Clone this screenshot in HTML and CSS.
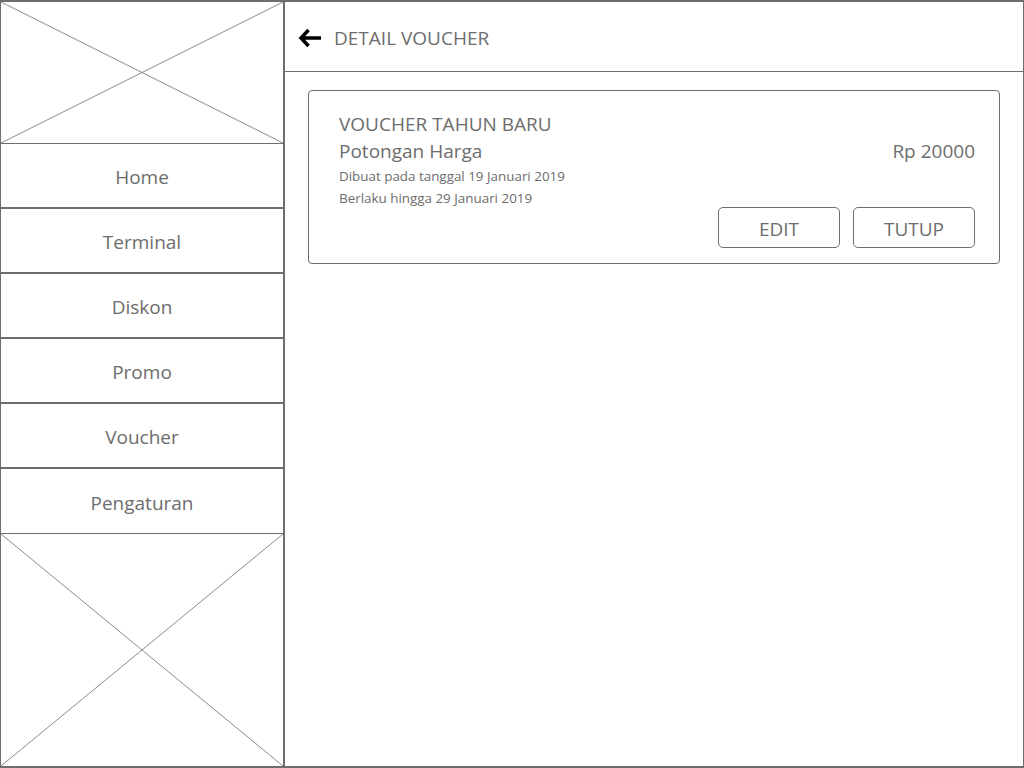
FILE: index.html
```html
<!DOCTYPE html>
<html lang="en">
<head>
  <meta charset="UTF-8" />
  <meta name="viewport" content="width=device-width, initial-scale=1" />
  <title>Detail Voucher</title>
  <link rel="stylesheet" href="styles.css">
</head>
<body>
  <div class="app">
    <aside class="sidebar">
      <div class="placeholder top">
        <svg viewBox="0 0 100 100" preserveAspectRatio="none">
          <line x1="0" y1="0" x2="100" y2="100" vector-effect="non-scaling-stroke" />
          <line x1="100" y1="0" x2="0" y2="100" vector-effect="non-scaling-stroke" />
        </svg>
      </div>
      <nav class="menu">
        <a class="menu-item">Home</a>
        <a class="menu-item">Terminal</a>
        <a class="menu-item">Diskon</a>
        <a class="menu-item">Promo</a>
        <a class="menu-item">Voucher</a>
        <a class="menu-item last">Pengaturan</a>
      </nav>
      <div class="placeholder bottom">
        <svg viewBox="0 0 100 100" preserveAspectRatio="none">
          <line x1="0" y1="0" x2="100" y2="100" vector-effect="non-scaling-stroke" />
          <line x1="100" y1="0" x2="0" y2="100" vector-effect="non-scaling-stroke" />
        </svg>
      </div>
    </aside>

    <main class="main">
      <header class="header">
        <svg class="back" viewBox="0 0 24 24" width="24" height="24">
          <path d="M23 12H4M10.5 4L3 12L10.5 20" />
        </svg>
        <h1>DETAIL VOUCHER</h1>
      </header>

      <section class="card">
        <div class="card-info">
          <h2>VOUCHER TAHUN BARU</h2>
          <div class="type-row">
            <span class="type">Potongan Harga</span>
            <span class="price">Rp 20000</span>
          </div>
          <p class="meta">Dibuat pada tanggal 19 Januari 2019</p>
          <p class="meta">Berlaku hingga 29 Januari 2019</p>
        </div>
        <div class="actions">
          <button>EDIT</button>
          <button>TUTUP</button>
        </div>
      </section>
    </main>
  </div>
</body>
</html>
```

FILE: styles.css
```css
* {
  box-sizing: border-box;
}
body {
  margin: 0;
  font-family: "Open Sans", "Noto Sans", sans-serif;
  color: #6d6d6d;
  background: #fff;
}
.app {
  display: flex;
  height: 768px;
  overflow: hidden;
  border-top: 2px solid #6e6e6e;
  border-bottom: 2px solid #6e6e6e;
  border-left: 1px solid #6e6e6e;
  border-right: 1px solid #6e6e6e;
}
.sidebar {
  width: 284px;
  display: flex;
  flex-direction: column;
  border-right: 2px solid #6e6e6e;
}
.placeholder svg {
  display: block;
  width: 100%;
  height: 100%;
}
.placeholder line {
  stroke: #8a8a8a;
  stroke-width: 1;
}
.placeholder.top {
  height: 142px;
  border-bottom: 1px solid #6e6e6e;
}
.placeholder.bottom {
  flex: 1;
  min-height: 0;
}
.menu {
  display: flex;
  flex-direction: column;
}
.menu-item {
  height: 65px;
  display: flex;
  align-items: center;
  justify-content: center;
  padding-top: 3px;
  font-size: 19px;
  color: #6d6d6d;
  border-bottom: 2px solid #6e6e6e;
}
.menu-item.last {
  border-bottom: 1px solid #6e6e6e;
}
.main {
  flex: 1;
  display: flex;
  flex-direction: column;
}
.header {
  height: 70px;
  display: flex;
  align-items: center;
  padding: 2px 0 0 13px;
  border-bottom: 1px solid #6e6e6e;
}
.back {
  fill: none;
  stroke: #000;
  stroke-width: 3.5;
  stroke-linecap: butt;
  stroke-linejoin: miter;
}
.header h1 {
  margin: 0 0 0 12px;
  font-size: 19px;
  font-weight: normal;
  color: #6d6d6d;
}
.card {
  margin: 18px 23px 0 23px;
  border: 1px solid #6e6e6e;
  border-radius: 4px;
  padding: 20px 24px 15px 30px;
}
.card h2 {
  margin: 0;
  font-size: 19px;
  font-weight: normal;
  line-height: 26px;
}
.type-row {
  display: flex;
  justify-content: space-between;
  align-items: center;
  margin-top: 1px;
  font-size: 19px;
  line-height: 27px;
}
.meta {
  margin: 0;
  font-size: 13.4px;
  line-height: 22px;
}
.actions {
  display: flex;
  justify-content: flex-end;
  gap: 13px;
  margin-top: -2px;
}
.actions button {
  width: 122px;
  height: 41px;
  padding: 2px 0 0;
  border: 1px solid #6e6e6e;
  border-radius: 5px;
  background: #fff;
  font-family: inherit;
  font-size: 19px;
  color: #6d6d6d;
}
```
